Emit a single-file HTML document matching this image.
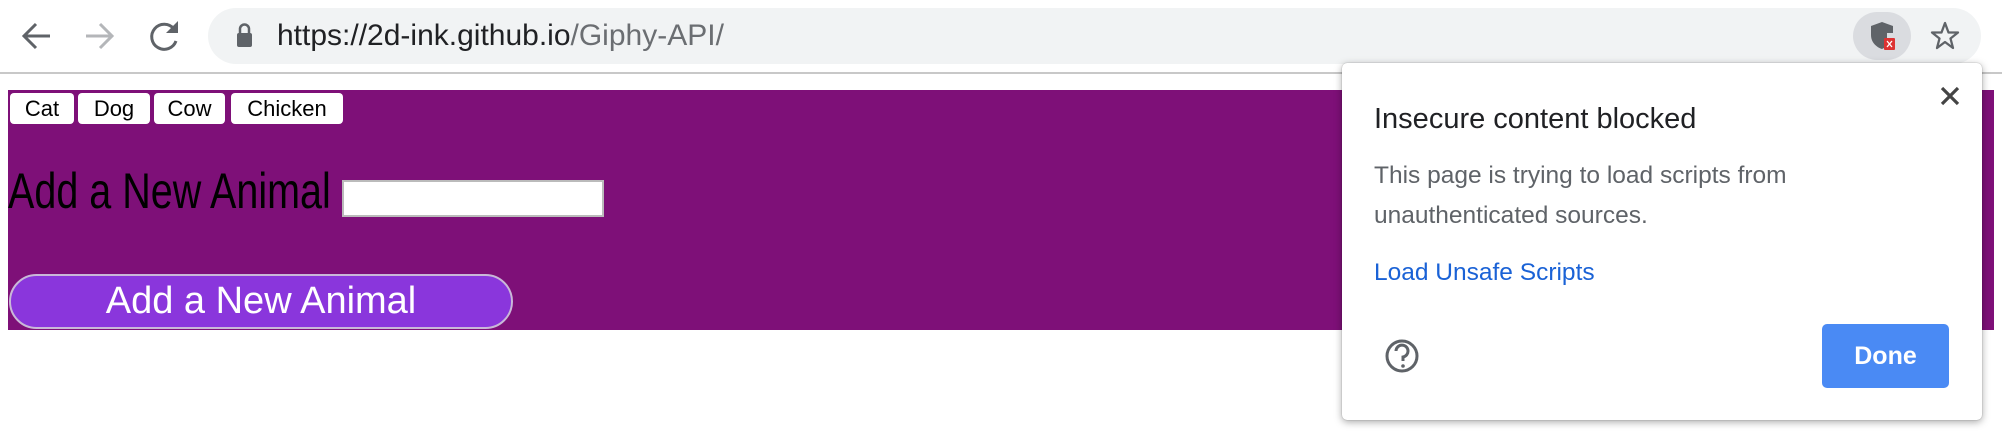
<!DOCTYPE html>
<html><head><meta charset="utf-8"><style>
*{margin:0;padding:0;box-sizing:border-box}
body{width:2002px;height:434px;background:#fff;position:relative;overflow:hidden;font-family:"Liberation Sans",Arial,sans-serif}
.abs{position:absolute}
.pill{left:208px;top:8px;width:1773px;height:56px;border-radius:28px;background:#f1f3f4}
.url{left:277px;top:14px;font-size:30px;line-height:44px;color:#202124;white-space:nowrap}
.url .g{color:#6b6e72}
.sep{left:0;top:72px;width:2002px;height:2px;background:#c8c8c8}
.purple{left:8px;top:90px;width:1986px;height:240px;background:#7e1078}
.b{top:93px;height:31px;background:#fff;border-radius:4px;font-size:22px;line-height:31px;text-align:center;color:#000}
.h{left:8px;top:166px;font-size:50px;line-height:50px;color:#000;transform:scaleX(.79);transform-origin:0 0;white-space:nowrap}
.inp{left:342px;top:180px;width:262px;height:37px;background:#fff;border:2px solid #bbb}
.big{left:9px;top:274px;width:504px;height:55px;border-radius:28px;background:#8a36dc;border:2px solid #c9b8d8;color:#fff;font-size:38px;line-height:50px;text-align:center}
.pop{left:1342px;top:63px;width:640px;height:357px;background:#fff;border-radius:5px;box-shadow:0 2px 8px rgba(0,0,0,.35),0 0 1px rgba(0,0,0,.4)}
.t{left:1374px;top:103px;font-size:29px;color:#202124;white-space:nowrap}
.p{left:1374px;top:156px;font-size:24.5px;line-height:40px;color:#5f6368;white-space:nowrap}
.l{left:1374px;top:259px;font-size:24.5px;color:#1a62d6;white-space:nowrap}
.done{left:1822px;top:324px;width:127px;height:64px;border-radius:5px;background:#4a8af4;color:#fff;font-weight:bold;font-size:25px;line-height:64px;text-align:center}
</style></head><body>
<svg class="abs" style="left:0;top:0" width="260" height="72">
 <g fill="none" stroke="#5f6368" stroke-width="3">
  <path d="M50 36H25M36 24L24 36L36 48"/>
 </g>
 <g fill="none" stroke="#b4b6b9" stroke-width="3"><path d="M86 36H111M100 24L112 36L100 48"/></g>
 <g fill="none" stroke="#5f6368" stroke-width="3"><path d="M174 29A12.5 12.5 0 1 0 176 41"/></g>
 <path d="M178 21V33H166Z" fill="#5f6368"/>
</svg>
<div class="abs pill"></div>
<svg class="abs" style="left:0;top:0" width="2002" height="72">
 <rect x="237" y="33" width="15" height="14" rx="2" fill="#5f6368"/>
 <path d="M240 34V29A4.5 4.5 0 0 1 249 29V34" fill="none" stroke="#5f6368" stroke-width="2.5"/>
 <rect x="1853" y="12" width="58" height="48" rx="24" fill="#dadce0"/>
 <path d="M1882 22L1871 26V35C1871 42 1876 47 1882 49C1884 48 1886 47 1887 46V33H1893V26Z" fill="#5f6368"/>
 <rect x="1884" y="38" width="11" height="12" rx="1" fill="#d33"/>
 <path d="M1887 41L1892 47M1892 41L1887 47" stroke="#fff" stroke-width="1.3"/>
 <path d="M1945 23L1948.5 32.5H1958L1950.5 38.5L1953 48L1945 42L1937 48L1939.5 38.5L1932 32.5H1941.5Z" fill="none" stroke="#5f6368" stroke-width="2.3" stroke-linejoin="round"/>
</svg>
<div class="abs url">https://<span style="color:#202124">2d-ink.github.io</span><span class="g">/Giphy-API/</span></div>
<div class="abs sep"></div>
<div class="abs purple"></div>
<div class="abs b" style="left:10px;width:64px">Cat</div>
<div class="abs b" style="left:78px;width:72px">Dog</div>
<div class="abs b" style="left:154px;width:71px">Cow</div>
<div class="abs b" style="left:231px;width:112px">Chicken</div>
<div class="abs h">Add a New Animal</div>
<div class="abs inp"></div>
<div class="abs big">Add a New Animal</div>
<div class="abs pop"></div>
<div class="abs t">Insecure content blocked</div>
<div class="abs p">This page is trying to load scripts from<br>unauthenticated sources.</div>
<div class="abs l">Load Unsafe Scripts</div>
<svg class="abs" style="left:1340px;top:60px" width="660" height="370">
 <path d="M602 28L618 44M618 28L602 44" stroke="#444" stroke-width="3.2"/>
 <circle cx="62" cy="296" r="15" fill="none" stroke="#5f6368" stroke-width="3"/>
 <path d="M56 291A6 6 0 1 1 63 297V301" fill="none" stroke="#5f6368" stroke-width="3"/>
 <circle cx="63" cy="306" r="1.8" fill="#5f6368"/>
</svg>
<div class="abs done">Done</div>
</body></html>
